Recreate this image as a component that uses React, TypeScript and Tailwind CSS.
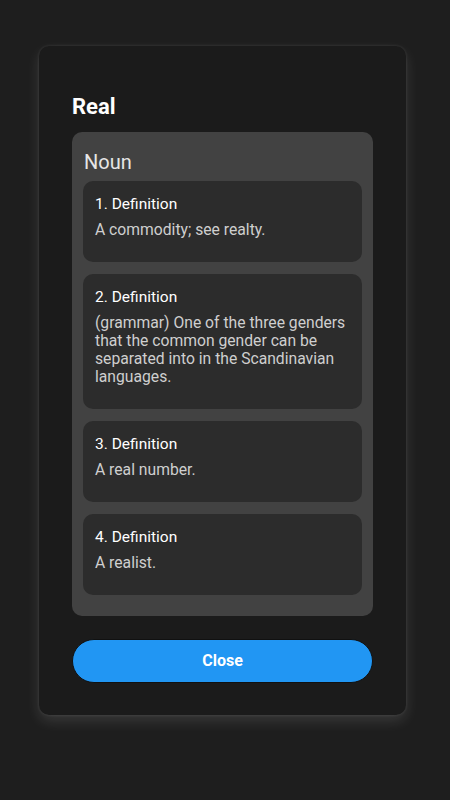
const definitions = [
  "A commodity; see realty.",
  "(grammar) One of the three genders that the common gender can be separated into in the Scandinavian languages.",
  "A real number.",
  "A realist.",
];

export default function App() {
  return (
    <div
      className="w-[450px] h-[800px] bg-[#1e1e1e] pt-[46px] pl-[39px]"
      style={{ fontFamily: "Roboto, 'Noto Sans', sans-serif" }}
    >
      {/* dialog */}
      <div className="w-[367px] h-[669px] bg-[#1b1b1b] rounded-[10px] px-[33px] pt-[48px] shadow-[0_6px_14px_rgba(255,255,255,0.12),0_0_3px_rgba(255,255,255,0.12)]">
        <h1 className="text-[22px] leading-[26px] font-bold text-white">Real</h1>

        <div className="mt-[12px] bg-[#424242] rounded-[10px] px-[11px] pt-[18px] pb-[21px]">
          <p className="text-[20px] leading-[24px] text-[#e6e6e6] mb-[7px] ml-[1px]">
            Noun
          </p>
          <div className="flex flex-col gap-[12px]">
            {definitions.map((d, i) => (
              <div
                key={i}
                className="bg-[#2c2c2c] rounded-[10px] px-[12px] pt-[14px] pb-[23px]"
              >
                <p className="text-[15.5px] leading-[18px] text-white">
                  {i + 1}. Definition
                </p>
                <p className="mt-[8px] text-[15.7px] leading-[18px] text-[#cfcfcf]">
                  {d}
                </p>
              </div>
            ))}
          </div>
        </div>

        <button className="mt-[23px] w-full h-[44px] rounded-full bg-[#2196f3] border border-[#111] text-white font-bold text-[16px]">
          Close
        </button>
      </div>
    </div>
  );
}
